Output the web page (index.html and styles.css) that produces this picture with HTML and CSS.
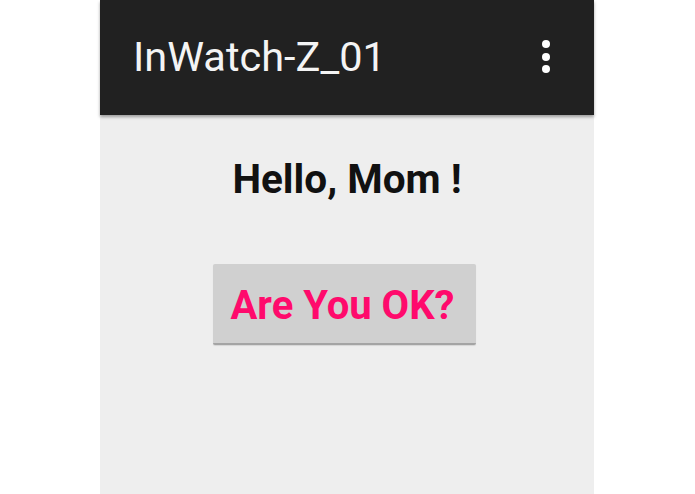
FILE: index.html
```html
<!DOCTYPE html>
<html>
<head>
<meta charset="utf-8">
<link rel="stylesheet" href="styles.css">
</head>
<body>
<div class="screen">
  <header class="appbar">
    <span class="title">InWatch-Z_01</span>
    <span class="overflow"><i></i><i></i><i></i></span>
  </header>
  <main class="content">
    <h1 class="greeting">Hello, Mom !</h1>
    <button class="ok-btn">Are You OK?</button>
  </main>
</div>
</body>
</html>
```
FILE: styles.css
```css
html, body {
  margin: 0;
  padding: 0;
  background: #ffffff;
  height: 494px;
  overflow: hidden;
}
.screen {
  width: 494px;
  height: 494px;
  margin-left: 100px;
  background: #eeeeee;
  display: flex;
  flex-direction: column;
  font-family: Roboto, "Liberation Sans", sans-serif;
}
.appbar {
  height: 115px;
  background: #212121;
  display: flex;
  align-items: center;
  justify-content: space-between;
  padding: 0 44px 0 33px;
  box-shadow: 0 2px 3px rgba(0,0,0,0.35);
  position: relative;
  z-index: 1;
  box-sizing: border-box;
}
.title {
  color: #f4f4f4;
  font-size: 41.5px;
  font-weight: 400;
  line-height: 48px;
  padding-bottom: 2px;
}
.overflow {
  display: flex;
  flex-direction: column;
  gap: 4.5px;
  padding-bottom: 2px;
}
.overflow i {
  display: block;
  width: 8px;
  height: 8px;
  border-radius: 50%;
  background: #ffffff;
}
.content {
  flex: 1;
  display: flex;
  flex-direction: column;
  align-items: center;
}
.greeting {
  margin: 41px 0 0 0;
  font-size: 40.5px;
  font-weight: 700;
  color: #111111;
  line-height: 46px;
}
.ok-btn {
  margin: 62px 5px 0 0;
  width: 263px;
  height: 81px;
  background: #d0d0d0;
  border: none;
  border-bottom: 2px solid #a4a4a4;
  border-radius: 2px;
  font-family: Roboto, "Liberation Sans", sans-serif;
  font-size: 40px;
  font-weight: 700;
  color: #ff0a6c;
  padding: 4px 4px 0 0;
  box-shadow: 0 1px 1px rgba(0,0,0,0.1);
}
```
